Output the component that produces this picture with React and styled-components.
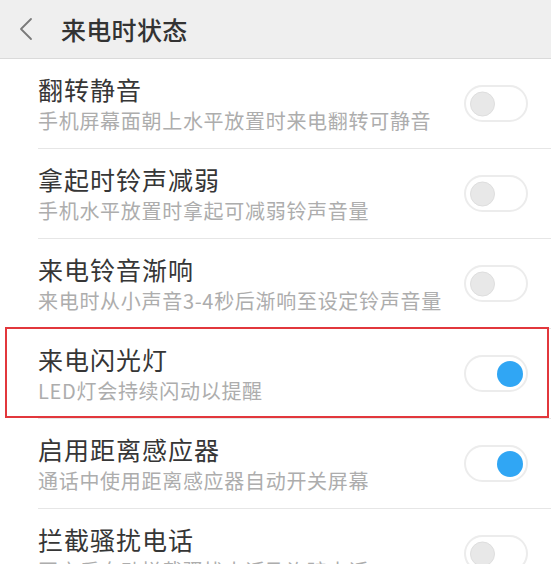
import React from "react";
import styled, { createGlobalStyle } from "styled-components";

const GlobalStyle = createGlobalStyle`
  body {
    margin: 0;
    background: #ffffff;
    font-family: "Noto Sans CJK SC", "Noto Sans", sans-serif;
  }
`;

const Page = styled.div`
  width: 551px;
  height: 564px;
  overflow: hidden;
  background: #ffffff;
`;

const Header = styled.div`
  height: 58px;
  display: flex;
  align-items: center;
  background: #efefef;
  border-bottom: 1px solid #dadada;
  padding-left: 18px;
`;

const BackButton = styled.div`
  width: 16px;
  height: 24px;
  display: flex;
  align-items: center;
  margin-right: 27px;
`;

const HeaderTitle = styled.h1`
  margin: 0;
  font-size: 25px;
  font-weight: 500;
  color: #333333;
  line-height: 1;
  letter-spacing: 0.3px;
`;

const List = styled.div`
  padding-left: 38px;
`;

const Item = styled.div`
  position: relative;
  height: 89px;
  display: flex;
  align-items: center;
  justify-content: space-between;
  padding-right: 23px;
  border-bottom: 1px solid #e6e6e6;

  ${(props) =>
    props.$highlight &&
    `
    &::after {
      content: "";
      position: absolute;
      top: -2px;
      bottom: 0;
      left: -33px;
      right: 2px;
      border: 2px solid #e2373c;
      pointer-events: none;
    }
  `}
`;

const TextBlock = styled.div`
  display: flex;
  flex-direction: column;
  padding-top: 2px;
`;

const Title = styled.div`
  font-size: 25px;
  line-height: 32px;
  color: #363636;
  letter-spacing: 1px;
`;

const SubTitle = styled.div`
  font-size: 20px;
  line-height: 32px;
  color: #adadad;
  letter-spacing: 0.7px;
`;

const Track = styled.div`
  position: relative;
  flex-shrink: 0;
  width: 64px;
  height: 37px;
  box-sizing: border-box;
  border: 2px solid #ececec;
  border-radius: 19px;
  background: #ffffff;
`;

const Knob = styled.div`
  position: absolute;
  top: 50%;
  transform: translateY(-50%);
  width: ${(props) => (props.$on ? "26px" : "25px")};
  height: ${(props) => (props.$on ? "26px" : "25px")};
  box-sizing: border-box;
  border-radius: 50%;
  left: ${(props) => (props.$on ? "31px" : "4px")};
  background: ${(props) => (props.$on ? "#30a6f4" : "#e8e8e8")};
  border: ${(props) => (props.$on ? "none" : "1px solid #dedede")};
`;

const Switch = ({ on }) => (
  <Track>
    <Knob $on={on} />
  </Track>
);

const items = [
  { title: "翻转静音", sub: "手机屏幕面朝上水平放置时来电翻转可静音", on: false },
  { title: "拿起时铃声减弱", sub: "手机水平放置时拿起可减弱铃声音量", on: false },
  { title: "来电铃音渐响", sub: "来电时从小声音3-4秒后渐响至设定铃声音量", on: false },
  { title: "来电闪光灯", sub: "LED灯会持续闪动以提醒", on: true, highlight: true },
  { title: "启用距离感应器", sub: "通话中使用距离感应器自动开关屏幕", on: true },
  { title: "拦截骚扰电话", sub: "开启后自动拦截骚扰电话及诈骗电话", on: false },
];

export default function App() {
  return (
    <Page>
      <GlobalStyle />
      <Header>
        <BackButton>
          <svg width="16" height="24" viewBox="0 0 16 24" fill="none">
            <path
              d="M13 2 L3 12 L13 22"
              stroke="#7a7a7a"
              strokeWidth="1.8"
              strokeLinecap="round"
              strokeLinejoin="round"
            />
          </svg>
        </BackButton>
        <HeaderTitle>来电时状态</HeaderTitle>
      </Header>
      <List>
        {items.map((item) => (
          <Item key={item.title} $highlight={item.highlight}>
            <TextBlock>
              <Title>{item.title}</Title>
              <SubTitle>{item.sub}</SubTitle>
            </TextBlock>
            <Switch on={item.on} />
          </Item>
        ))}
      </List>
    </Page>
  );
}
